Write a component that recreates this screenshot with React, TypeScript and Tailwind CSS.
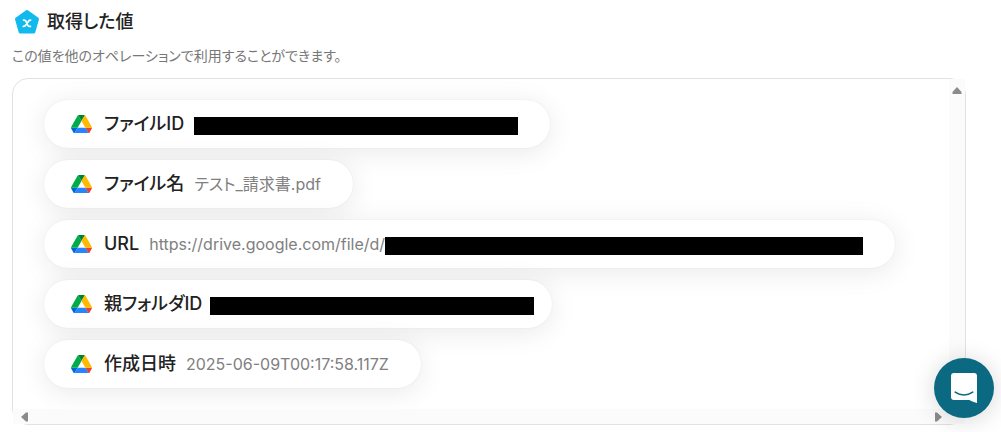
import { ReactNode } from "react";

interface OutputValue {
  label: string;
  value?: string;
  mask?: string;
}

const outputs: OutputValue[] = [
  { label: "ファイルID", mask: "ml-[10px] w-[324px] mr-8" },
  { label: "ファイル名", value: "テスト_請求書.pdf" },
  { label: "URL", value: "https://drive.google.com/file/d/", mask: "w-[478px] mr-8" },
  { label: "親フォルダID", mask: "ml-2 w-[324px] mr-[18px]" },
  { label: "作成日時", value: "2025-06-09T00:17:58.117Z" },
];

function DriveIcon() {
  return (
    <svg viewBox="0 0 87.3 78" className="w-[21px] shrink-0" aria-hidden="true">
      <path d="m6.6 66.85 3.85 6.65c.8 1.4 1.95 2.5 3.3 3.3L27.5 53H0c0 1.55.4 3.1 1.2 4.5z" fill="#0066da" />
      <path d="M43.65 25 29.9 1.2c-1.35.8-2.5 1.9-3.3 3.3l-25.4 44A9.06 9.06 0 0 0 0 53h27.5z" fill="#00ac47" />
      <path d="M73.55 76.8c1.35-.8 2.5-1.9 3.3-3.3l1.6-2.75L86.1 57.5c.8-1.4 1.2-2.95 1.2-4.5H59.8l5.85 11.5z" fill="#ea4335" />
      <path d="M43.65 25 57.4 1.2C56.05.4 54.5 0 52.9 0H34.4c-1.6 0-3.15.45-4.5 1.2z" fill="#00832d" />
      <path d="M59.8 53H27.5L13.75 76.8c1.35.8 2.9 1.2 4.5 1.2h50.8c1.6 0 3.15-.45 4.5-1.2z" fill="#2684fc" />
      <path d="m73.4 26.5-12.7-22c-.8-1.4-1.95-2.5-3.3-3.3L43.65 25 59.8 53h27.45c0-1.55-.4-3.1-1.2-4.5z" fill="#ffba00" />
    </svg>
  );
}

function VariableIcon() {
  return (
    <svg viewBox="0 0 26 26" className="size-[26px] shrink-0" aria-hidden="true">
      <path
        d="M13 2.5 23.5 10 19.8 23H6.2L2.5 10Z"
        fill="#12b9ec"
        stroke="#12b9ec"
        strokeWidth="3"
        strokeLinejoin="round"
      />
      <path
        d="M9.6 11.1h.6c.9 0 1.300.3 1.700 1.100l1.900 4.100c.4.8.8 1.100 1.700 1.100h.9M16.600 11.100c-1.100 0-1.500.3-2.100 1.100l-2.900 4c-.6.9-1.100 1.200-2.300 1.200"
        fill="none"
        stroke="#fff"
        strokeWidth="1.7"
        strokeLinecap="round"
      />
    </svg>
  );
}

function Arrow({ children }: { children: ReactNode }) {
  return (
    <svg viewBox="0 0 10 10" className="size-[10px] fill-[#8b8b8b]" aria-hidden="true">
      {children}
    </svg>
  );
}

function ValuePill({ label, value, mask }: OutputValue) {
  return (
    <li className="flex h-12 w-fit items-center rounded-full bg-white pl-[27px] whitespace-nowrap shadow-[0_4px_28px_rgba(0,0,0,0.09),0_0_2px_rgba(0,0,0,0.07)]">
      <DriveIcon />
      <div className="ml-3 flex items-baseline gap-[10px]">
        <span className="text-[18px] leading-6 font-medium text-[#222222]">{label}</span>
        {value && <span className={`text-[16px] leading-6 text-[#808080] ${mask ? "" : "mr-8"}`}>{value}</span>}
      </div>
      {mask && <span className={`mt-1 h-[18px] bg-black ${mask}`} />}
    </li>
  );
}

export default function App() {
  return (
    <main className="bg-white pt-[9px] pr-[35px] pb-2 pl-3 font-['Inter','Noto_Sans_CJK_JP',sans-serif] [font-feature-settings:'palt']">
      <header>
        <div className="flex items-center gap-[7px] pl-[2px]">
          <VariableIcon />
          <h2 className="text-[18px] leading-[26px] font-medium text-[#222222]">取得した値</h2>
        </div>
        <p className="mt-[11px] text-[14px] leading-5 text-[#777777]">
          この値を他のオペレーションで利用することができます。
        </p>
      </header>

      <section className="mt-3 grid grid-cols-[1fr_16px] rounded-2xl border border-[#e2e2e2]">
        <ul className="flex flex-col gap-3 overflow-hidden rounded-tl-2xl pt-[21px] pb-[21px] pl-[31px]">
          {outputs.map((item) => (
            <ValuePill key={item.label} {...item} />
          ))}
        </ul>

        {/* Scrollbar tracks */}
        <div className="flex justify-center bg-[#fbfbfb] pt-[7px]">
          <Arrow>
            <path d="M5 1 9.5 6v2H.5V6Z" />
          </Arrow>
        </div>
        <div className="flex h-[15px] items-center justify-between bg-[#fbfbfb] pr-[6px] pl-[7px]">
          <Arrow>
            <path d="M1 5 6 .5h2v9H6Z" />
          </Arrow>
          <Arrow>
            <path d="M9 5 4 .5H2v9h2Z" />
          </Arrow>
        </div>
        <div className="bg-[#fbfbfb]" />
      </section>

      <button
        type="button"
        aria-label="チャットを開く"
        className="fixed right-[7px] bottom-[14px] flex size-[60px] items-center justify-center rounded-full bg-[#0b6a82] shadow-[0_2px_24px_rgba(0,0,0,0.16)]"
      >
        <svg viewBox="0 0 28 32" className="h-8 w-7" aria-hidden="true">
          <path
            d="M4 1h20a3 3 0 0 1 3 3v27s-4.500-1-7.500-3H4a3 3 0 0 1-3-3V4a3 3 0 0 1 3-3Z"
            fill="#fff"
          />
          <path
            d="M5.200 20.200c5.200 3.700 12.300 3.700 17.500 0"
            fill="none"
            stroke="#0b6a82"
            strokeWidth="1.6"
            strokeLinecap="round"
          />
        </svg>
      </button>
    </main>
  );
}
